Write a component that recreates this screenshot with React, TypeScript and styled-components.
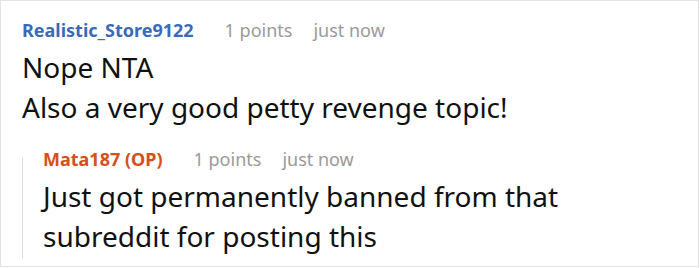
import React from "react";
import styled, { createGlobalStyle } from "styled-components";

const Global = createGlobalStyle`
  html, body { margin: 0; padding: 0; background: #fff; }
  body { font-family: "Noto Sans", "Open Sans", sans-serif; }
`;

const Frame = styled.div`
  box-sizing: border-box;
  width: 699px;
  height: 267px;
  border: 1px solid #e3e3e3;
  padding: 14px 0 0 21px;
  overflow: hidden;
`;

const Comment = styled.div`
  display: flex;
  flex-direction: column;
`;

const Meta = styled.div`
  display: flex;
  align-items: baseline;
  height: 32px;
  line-height: 30px;
  white-space: nowrap;
`;

const Author = styled.span<{ $op?: boolean }>`
  font-size: 18px;
  font-weight: 700;
  color: ${(p) => (p.$op ? "#d6501b" : "#3a6ab8")};
  margin-right: 31px;
`;

const Info = styled.span`
  font-size: 18px;
  color: #9a9a9a;
  margin-right: 21px;
`;

const Body = styled.div`
  font-size: 28px;
  line-height: 40px;
  color: #111;
  white-space: nowrap;
`;

const Reply = styled.div`
  position: relative;
  margin-top: 17px;
  padding-left: 21px;
  display: flex;
  flex-direction: column;

  &::before {
    content: "";
    position: absolute;
    left: 0;
    top: 14px;
    bottom: -2px;
    width: 1px;
    background: #dcdcdc;
  }
`;

export default function App() {
  return (
    <>
      <Global />
      <Frame>
        <Comment>
          <Meta>
            <Author>Realistic_Store9122</Author>
            <Info>1 points</Info>
            <Info>just now</Info>
          </Meta>
          <Body>Nope NTA</Body>
          <Body>Also a very good petty revenge topic!</Body>
          <Reply>
            <Meta>
              <Author $op>Mata187 (OP)</Author>
              <Info>1 points</Info>
              <Info>just now</Info>
            </Meta>
            <Body>Just got permanently banned from that</Body>
            <Body>subreddit for posting this</Body>
          </Reply>
        </Comment>
      </Frame>
    </>
  );
}
